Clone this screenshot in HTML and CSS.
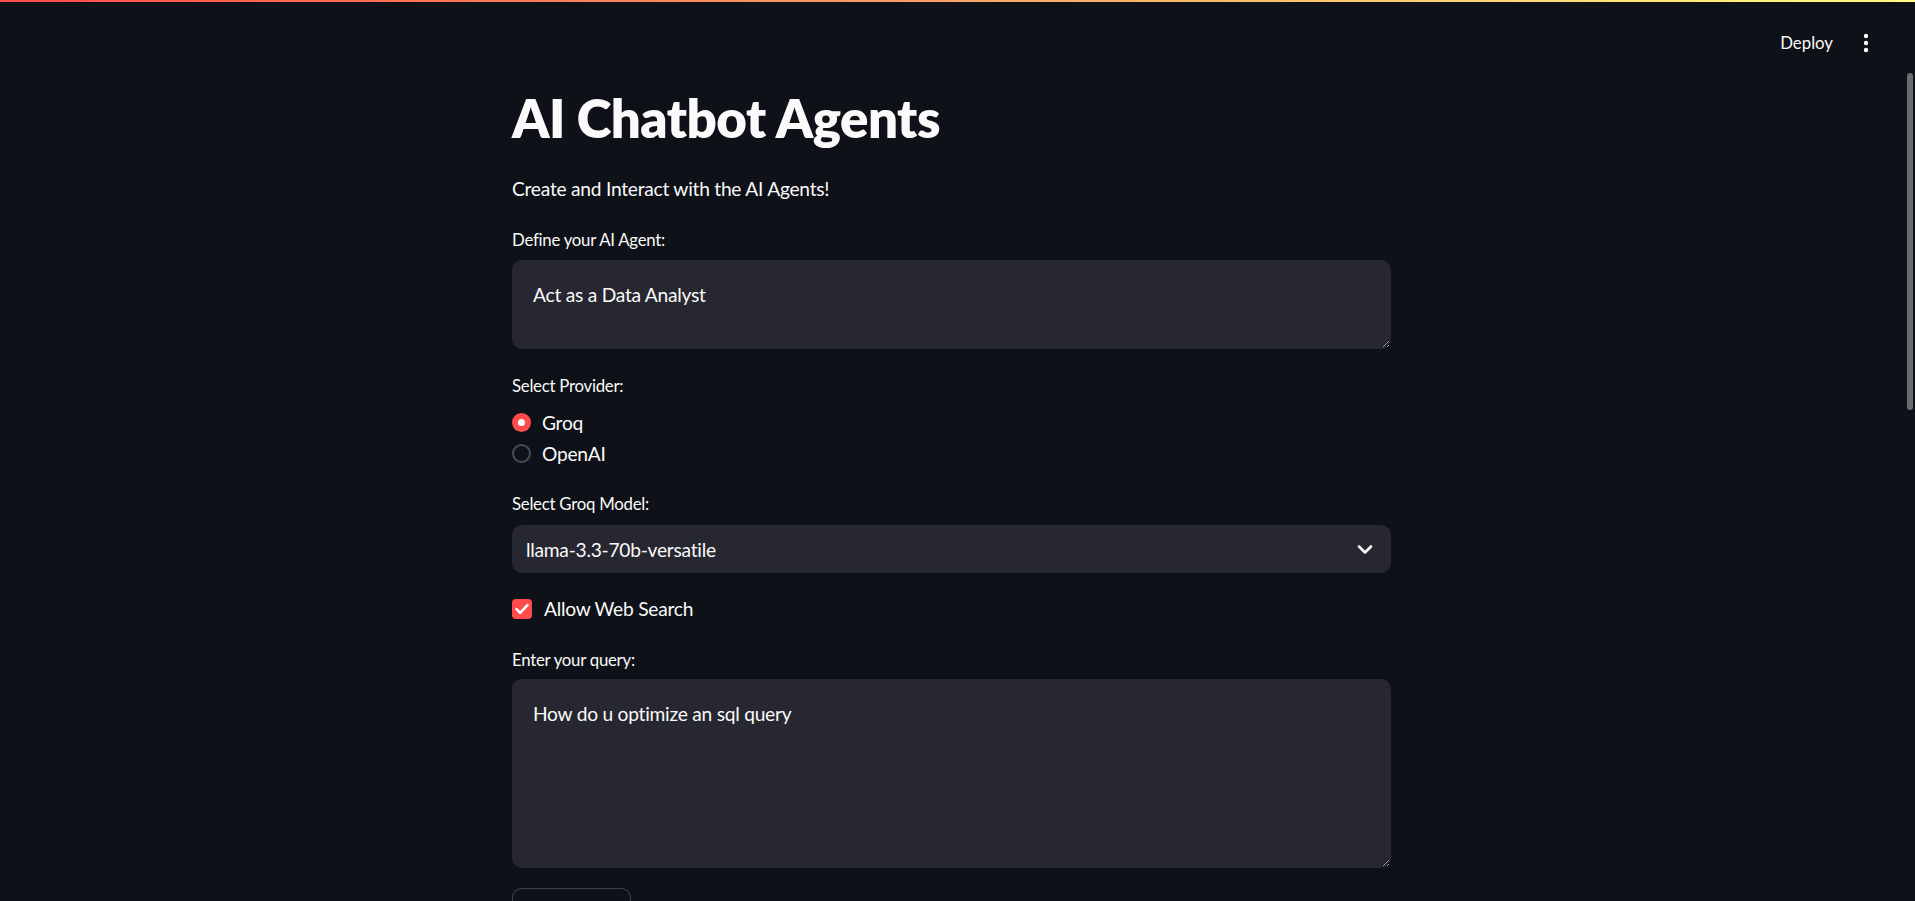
FILE: index.html
```html
<!DOCTYPE html>
<html lang="en">
<head>
<meta charset="utf-8">
<title>AI Chatbot Agents</title>
<link rel="stylesheet" href="styles.css">
</head>
<body>
<div class="decoration"></div>
<div class="app">
  <div class="main">
    <header class="toolbar">
      <span class="deploy">Deploy</span>
      <span class="kebab">
        <svg width="24" height="24" viewBox="0 0 24 24"><circle cx="12" cy="5" r="2.2" fill="#fafafa"/><circle cx="12" cy="12" r="2.2" fill="#fafafa"/><circle cx="12" cy="19" r="2.2" fill="#fafafa"/></svg>
      </span>
    </header>
    <div class="block-container">
      <h1 class="title">AI Chatbot Agents</h1>
      <p class="lead">Create and Interact with the AI Agents!</p>

      <div class="field">
        <span class="label">Define your AI Agent:</span>
        <textarea class="textarea ta-sm" readonly>Act as a Data Analyst</textarea>
      </div>

      <div class="field field-provider">
        <span class="label">Select Provider:</span>
        <div class="radio-group">
          <div class="radio-row"><span class="radio checked"></span><span>Groq</span></div>
          <div class="radio-row"><span class="radio"></span><span>OpenAI</span></div>
        </div>
      </div>

      <div class="field">
        <span class="label">Select Groq Model:</span>
        <div class="select">
          <span>llama-3.3-70b-versatile</span>
          <svg class="chevron" width="24" height="24" viewBox="0 0 24 24"><path d="M6 9.5l6 6 6-6" fill="none" stroke="#fafafa" stroke-width="2.6" stroke-linecap="round" stroke-linejoin="round"/></svg>
        </div>
      </div>

      <div class="checkbox-row">
        <span class="checkbox"><svg width="20" height="20" viewBox="0 0 20 20"><path d="M4.5 10.2l3.6 3.6 7.4-7.6" fill="none" stroke="#ffffff" stroke-width="2.6" stroke-linecap="round" stroke-linejoin="round"/></svg></span>
        <span>Allow Web Search</span>
      </div>

      <div class="field field-query">
        <span class="label">Enter your query:</span>
        <textarea class="textarea ta-lg" readonly>How do u optimize an sql query</textarea>
      </div>

      <div class="btn-row"><button class="btn">Ask Agent!</button></div>
    </div>
  </div>
  <div class="gutter"><div class="thumb"></div></div>
</div>
</body>
</html>
```
FILE: styles.css
```css
html, body {
  margin: 0;
  padding: 0;
  height: 100%;
}
body {
  background: #0e1117;
  color: #fafafa;
  font-family: "Lato", "Source Sans Pro", "Liberation Sans", sans-serif;
  overflow: hidden;
  color-scheme: dark;
}
.decoration {
  height: 2px;
  background: linear-gradient(90deg, #ff4b4b, #fffd80);
}
.app {
  display: flex;
  height: calc(100vh - 2px);
}
.main {
  flex: 1;
  overflow: hidden;
}
.gutter {
  width: 12px;
  display: flex;
  justify-content: flex-end;
  padding-right: 2px;
  box-sizing: border-box;
}
.thumb {
  margin-top: 71px;
  width: 6px;
  height: 337px;
  border-radius: 3px;
  background: #6b6c70;
}
.toolbar {
  height: 70px;
  box-sizing: border-box;
  display: flex;
  justify-content: flex-end;
  align-items: flex-start;
  padding: 29px 25px 0 0;
  gap: 21px;
}
.deploy {
  font-size: 16.8px;
  line-height: 24px;
}
.kebab {
  display: flex;
}
.kebab svg { width: 24px; height: 24px; }
.block-container {
  width: 879px;
  margin: 0 auto;
  padding-top: 14px;
  display: flex;
  flex-direction: column;
  gap: 23.5px;
  letter-spacing: -0.25px;
}
.title {
  margin: 0;
  font-size: 52.8px;
  line-height: 1.2;
  font-weight: 800;
  letter-spacing: -0.5px;
}
.lead {
  margin: 1px 0 -0.5px;
  font-size: 19.2px;
  line-height: 1.6;
}
.field {
  display: flex;
  flex-direction: column;
  gap: 8px;
}
.field-provider { margin-top: 1.5px; }
.field-query { gap: 7px; }
.label {
  font-size: 16.8px;
  line-height: 24px;
}
.textarea {
  display: block;
  width: 100%;
  box-sizing: border-box;
  background: #262730;
  color: #fafafa;
  border: 1px solid #262730;
  border-radius: 9.6px;
  padding: 19.2px 20px;
  font-family: inherit;
  font-size: 19.2px;
  line-height: 1.6;
  letter-spacing: -0.25px;
  resize: vertical;
  outline: none;
  margin: 0;
}
.ta-sm { height: 89px; }
.ta-lg { height: 189px; }
.radio-group {
  display: flex;
  flex-direction: column;
  padding-top: 1px;
}
.radio-row {
  display: flex;
  align-items: center;
  gap: 11px;
  height: 31px;
  font-size: 19.2px;
}
.radio {
  width: 19px;
  height: 19px;
  box-sizing: border-box;
  border-radius: 50%;
  border: 2px solid #4a4c54;
  background: #0e1117;
  display: flex;
  align-items: center;
  justify-content: center;
}
.radio.checked {
  border: none;
  background: #ff4b4b;
}
.radio.checked::after {
  content: "";
  width: 7px;
  height: 7px;
  border-radius: 50%;
  background: #fafafa;
}
.select {
  margin-top: 1px;
  height: 48px;
  box-sizing: border-box;
  background: #262730;
  border: 1px solid #262730;
  border-radius: 9.6px;
  display: flex;
  align-items: center;
  justify-content: space-between;
  padding: 0 13px;
  font-size: 19.2px;
}
.chevron { display: block; }
.checkbox-row {
  display: flex;
  align-items: center;
  gap: 12px;
  height: 29px;
  font-size: 19.2px;
  margin: -2.5px 0 1px;
}
.checkbox {
  width: 20px;
  height: 20px;
  border-radius: 4px;
  background: #ff4b4b;
  display: flex;
}
.btn-row { display: flex; margin-top: -3px; }
.btn {
  background: #0e1117;
  color: #fafafa;
  border: 1px solid rgba(250, 250, 250, 0.2);
  border-radius: 9.6px;
  padding: 13px 13px;
  font-family: inherit;
  font-size: 19.2px;
  line-height: 1.6;
}
```
